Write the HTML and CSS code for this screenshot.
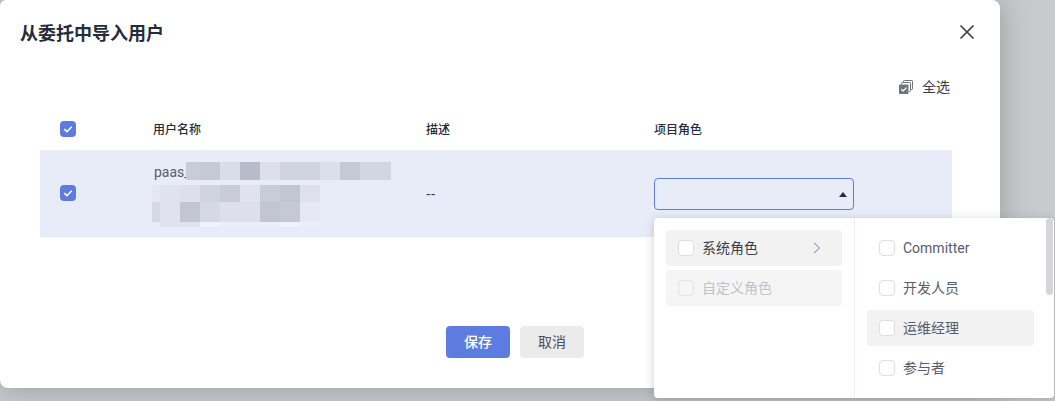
FILE: index.html
```html
<!DOCTYPE html>
<html lang="zh-CN">
<head>
<meta charset="utf-8">
<title>从委托中导入用户</title>
<link rel="stylesheet" href="styles.css">
</head>
<body>
<div class="backdrop">
  <section class="modal">
    <header class="modal-head">
      <h2 class="modal-title">从委托中导入用户</h2>
      <button class="close" aria-label="关闭">
        <svg width="16" height="16" viewBox="0 0 16 16"><path d="M1.5 1.5 14.5 14.5M14.5 1.5 1.5 14.5" fill="none" stroke="#3a3f4d" stroke-width="1.7"/></svg>
      </button>
    </header>
    <div class="toolbar">
      <svg class="select-all-icon" width="14" height="14" viewBox="0 0 14 14">
        <path d="M4.5 2.5V1.2a.7.7 0 0 1 .7-.7h7.6a.7.7 0 0 1 .7.7v7.6a.7.7 0 0 1-.7.7h-.6" fill="none" stroke="#71757f"/>
        <path d="M2.5 4.5V3.2a.7.7 0 0 1 .7-.7h7.6a.7.7 0 0 1 .7.7v7.6a.7.7 0 0 1-.7.7h-.6" fill="none" stroke="#71757f"/>
        <rect x="0" y="4.5" width="9.5" height="9.5" rx="1" fill="#71757f"/>
        <path d="M2.2 9.2 4.2 11 7.5 7.6" fill="none" stroke="#fff" stroke-width="1.2"/>
      </svg>
      <span class="select-all">全选</span>
    </div>
    <div class="table">
      <div class="thead">
        <div class="cell-check"><span class="check on"><svg width="16" height="16" viewBox="0 0 16 16"><path d="M4.3 8.2 7 10.7 11.7 5.8" fill="none" stroke="#fff" stroke-width="1.6"/></svg></span></div>
        <div class="th-name">用户名称</div>
        <div>描述</div>
        <div>项目角色</div>
      </div>
      <div class="tbody-row">
        <div class="cell-check"><span class="check on"><svg width="16" height="16" viewBox="0 0 16 16"><path d="M4.3 8.2 7 10.7 11.7 5.8" fill="none" stroke="#fff" stroke-width="1.6"/></svg></span></div>
        <div class="name-cell">
          <div class="name-line"><span class="name-text">paas_</span>
            <div class="mosaic first">
              <i class="c14 s3"></i><i class="s3b"></i><i class="s6"></i><i class="s1"></i><i class="s7"></i><i class="s4"></i><i class="s4"></i><i class="s6b"></i><i class="s3b"></i><i class="s5"></i><i class="c11 s5"></i>
            </div>
          </div>
          <div class="mosaic-block">
            <div class="mosaic r2"><i class="c8 s9"></i><i class="s8"></i><i class="s7"></i><i class="s4b"></i><i class="s2"></i><i class="s8"></i><i class="s2b"></i><i class="s2c"></i><i class="s7b"></i></div>
            <div class="mosaic r3"><i class="c8 s5b"></i><i class="s8"></i><i class="s2c"></i><i class="s5c"></i><i class="s7"></i><i class="s7"></i><i class="s2c"></i><i class="s3b"></i><i class="s9b"></i></div>
            <div class="mosaic r4"><i class="c8 blank"></i><i class="s8"></i><i class="s8"></i><i class="s10"></i><i class="s10b"></i><i class="s10b"></i><i class="s10b"></i><i class="s10"></i><i class="s10b"></i></div>
          </div>
        </div>
        <div class="desc">--</div>
        <div class="role-cell">
          <div class="select"><span class="caret"></span></div>
          <div class="dropdown">
            <div class="dd-left">
              <div class="dd-item active"><span class="box"></span><span class="dd-text">系统角色</span>
                <svg class="chev" width="8" height="12" viewBox="0 0 8 12"><path d="M1 .8 6.5 6 1 11.2" fill="none" stroke="#73788a" stroke-width="1"/></svg>
              </div>
              <div class="dd-item disabled"><span class="box"></span><span class="dd-text">自定义角色</span></div>
            </div>
            <div class="dd-right">
              <div class="dd-item"><span class="box"></span><span class="latin">Committer</span></div>
              <div class="dd-item"><span class="box"></span><span class="dd-text">开发人员</span></div>
              <div class="dd-item active"><span class="box"></span><span class="dd-text">运维经理</span></div>
              <div class="dd-item"><span class="box"></span><span class="dd-text">参与者</span></div>
            </div>
            <div class="scroll-thumb"></div>
          </div>
        </div>
      </div>
    </div>
    <footer class="actions">
      <button class="btn primary">保存</button>
      <button class="btn">取消</button>
    </footer>
  </section>
</div>
</body>
</html>
```
FILE: styles.css
```css
* { box-sizing: border-box; }
html, body { margin: 0; height: 100%; overflow: hidden; }
body { font-family: "Noto Sans CJK SC", "Noto Sans", sans-serif; color: #252b3a; }
.backdrop { width: 1055px; height: 401px; background: #c9cacd; overflow: hidden; }
.modal { width: 1000px; height: 388px; background: #fff; border-radius: 6px 8px 8px 8px; box-shadow: 0 0 32px rgba(60, 62, 70, .35); display: flex; flex-direction: column; }
.modal-head { height: 66px; padding: 0 24px 2px 20px; display: flex; align-items: center; justify-content: space-between; }
.modal-title { margin: 0; font-size: 18px; line-height: 26px; font-weight: 700; color: #252b3a; }
.close { border: 0; background: none; padding: 0; width: 16px; height: 16px; margin-right: 1px; display: block; }
.close svg { display: block; }
.toolbar { height: 44px; padding: 0 50px 2px 0; display: flex; align-items: center; justify-content: flex-end; }
.select-all-icon { margin-right: 9px; }
.select-all { font-size: 14px; color: #3a3f4d; padding-bottom: 2px; }
.table { margin: 0 48px 0 40px; }
.thead, .tbody-row { display: grid; grid-template-columns: 114px 272px 228px 1fr; align-items: center; }
.thead { height: 40px; font-size: 12px; font-weight: 500; color: #252b3a; padding-bottom: 4px; }
.thead .cell-check { padding-bottom: 0; padding-top: 2px; }
.th-name { margin-left: -1px; }
.tbody-row { height: 87px; padding-top: 1px; background: #e8ecf8; font-size: 14px; color: #575d6c; }
.cell-check { padding: 0 0 2px 20px; display: flex; }
.check { width: 16px; height: 16px; border-radius: 4px; display: block; }
.check.on { background: #5e7ce0; }
.check svg { display: block; }
.name-cell { align-self: start; padding-top: 11px; }
.name-line { display: flex; align-items: flex-start; height: 18px; }
.name-text { font-family: "Roboto", sans-serif; font-size: 14px; line-height: 20px; width: 32px; color: #575d6c; white-space: nowrap; }
.mosaic { display: flex; }
.mosaic i { display: block; width: 20px; height: 18px; }
.mosaic i.c14 { width: 14px; }
.mosaic i.c11 { width: 11px; }
.mosaic i.c8 { width: 8px; }
.mosaic-block { margin: 5px 0 0 -2px; }
.mosaic.r2 i { height: 17px; }
.mosaic.r3 i { height: 20px; }
.mosaic.r4 i { height: 5px; }
.s1 { background: #b8bbc9; }
.s2 { background: #c8cbd8; }
.s2b { background: #c8ccd8; }
.s2c { background: #c2c6d1; }
.s3 { background: #c8ccd6; }
.s3b { background: #c5c9d5; }
.s4 { background: #d0d4e0; }
.s4b { background: #cfd4e0; }
.s5 { background: #d2d6e2; }
.s5b { background: #d5d8e5; }
.s5c { background: #d4d9e5; }
.s6 { background: #d9dde8; }
.s6b { background: #dbdfea; }
.s7 { background: #dde0eb; }
.s7b { background: #dee1ec; }
.s8 { background: #e0e3ee; }
.s9 { background: #e4e7f2; }
.s9b { background: #e6e9f5; }
.s10 { background: #f0f2fb; }
.s10b { background: #ebeefa; }
.blank { background: transparent; }
.desc { font-family: "Liberation Sans", sans-serif; font-size: 14px; line-height: 16px; color: #3a3f4d; }
.role-cell { position: relative; }
.select { width: 200px; height: 32px; border: 1px solid #5e7ce0; border-radius: 4px; display: flex; align-items: center; justify-content: flex-end; padding-right: 6px; }
.caret { width: 0; height: 0; border-left: 4px solid transparent; border-right: 4px solid transparent; border-bottom: 5px solid #252b3a; }
.dropdown { position: absolute; left: 0; top: 40px; width: 400px; height: 180px; background: #fff; border-radius: 4px; box-shadow: 0 2px 10px rgba(60, 62, 70, .25); display: flex; font-size: 14px; color: #575d6c; }
.dd-left { width: 201px; padding: 12px 12px 0; border-right: 1px solid #ebedf2; display: flex; flex-direction: column; gap: 4px; }
.dd-right { flex: 1; padding: 12px 20px 0 12px; display: flex; flex-direction: column; gap: 4px; }
.dd-item { height: 36px; padding-left: 12px; border-radius: 4px; display: flex; align-items: center; gap: 8px; position: relative; }
.dd-text { padding-bottom: 2px; }
.dd-item.active { background: #f2f2f3; }
.dd-left .dd-item.active { color: #3a3f4d; }
.dd-item.disabled { background: #f5f5f6; color: #c0c2c7; }
.box { width: 16px; height: 16px; background: #fff; border: 1px solid #dcdee3; border-radius: 4px; flex: none; }
.disabled .box { background: #f5f5f6; border-color: #e3e4e7; }
.latin { font-family: "Roboto", sans-serif; font-size: 14px; }
.chev { position: absolute; right: 21px; top: 12px; }
.scroll-thumb { position: absolute; top: 0; right: 1px; width: 7px; height: 77px; background: #d5d6d9; border-radius: 4px; }
.actions { margin-top: 89px; padding-left: 446px; display: flex; gap: 10px; }
.btn { width: 64px; height: 32px; border: 0; border-radius: 4px; background: #ebebeb; color: #4a4f5c; font: 14px "Noto Sans CJK SC", sans-serif; padding: 0 0 2px; }
.btn.primary { background: #5e7ce0; color: #fff; font-weight: 500; }
```
